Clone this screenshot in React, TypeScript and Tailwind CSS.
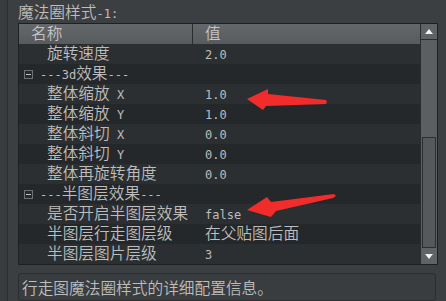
import React from "react";

type Row = { name?: string; value?: string; section?: string };

const rows: Row[] = [
  { name: "旋转速度", value: "2.0" },
  { section: "---3d效果---" },
  { name: "整体缩放 X", value: "1.0" },
  { name: "整体缩放 Y", value: "1.0" },
  { name: "整体斜切 X", value: "0.0" },
  { name: "整体斜切 Y", value: "0.0" },
  { name: "整体再旋转角度", value: "0.0" },
  { section: "---半图层效果---" },
  { name: "是否开启半图层效果", value: "false" },
  { name: "半图层行走图层级", value: "在父贴图后面" },
  { name: "半图层图片层级", value: "3" },
];

// CJK runs are drawn larger than the latin (mono) runs, like the Qt widget does
const Mixed = ({ text }: { text: string }) => {
  const parts = text.split(/([\u3000-\u9fff\uff00-\uffef]+)/).filter(Boolean);
  return (
    <>
      {parts.map((p, i) =>
        /[\u3000-\u9fff\uff00-\uffef]/.test(p) ? (
          <span key={i} className="text-[15.7px] font-[350]">
            {p}
          </span>
        ) : (
          <span key={i} className="text-[12px] whitespace-pre">
            {p}
          </span>
        )
      )}
    </>
  );
};

export default function App() {
  return (
    <div className="relative w-[446px] h-[301px] overflow-hidden flex bg-[#3c3f41] text-[#bdbdbd] font-['DejaVu_Sans_Mono','Noto_Sans_CJK_SC',monospace]">
      <div className="w-[8px] bg-[#393b3e] border-r border-[#2c2e30]" />

      <div className="flex-1 flex flex-col pl-[10px] pr-[8px]">
        {/* Title */}
        <div className="h-[23px] pt-[4px] leading-[18px]">
          <Mixed text="魔法圈样式-1:" />
        </div>

        {/* Property table */}
        <div className="h-[242px] flex border border-[#1e2022]">
          <div className="flex-1 flex flex-col">
            <div className="h-[20px] flex leading-[20px] bg-gradient-to-b from-[#64686b] to-[#575b5e] text-[#c4c4c4]">
              <div className="w-[174px] pl-[12px] border-r border-[#2a2c2e]">
                <Mixed text="名称" />
              </div>
              <div className="flex-1 pl-[12px]">
                <Mixed text="值" />
              </div>
            </div>
            {rows.map((r, i) => (
              <div
                key={i}
                className={`h-[20px] flex items-center leading-[20px] ${
                  i % 2 === 0 ? "bg-[#2c2f31]" : "bg-[#25282a]"
                }`}
              >
                {r.section ? (
                  <div className="flex items-center pl-[5px] gap-[7px]">
                    <div className="w-[9px] h-[9px] flex items-center justify-center border border-[#6f7275] bg-[#27292b]">
                      <div className="w-[5px] h-[1px] bg-[#c0c0c0]" />
                    </div>
                    <div>
                      <Mixed text={r.section} />
                    </div>
                  </div>
                ) : (
                  <>
                    <div className="w-[174px] pl-[28px] whitespace-nowrap">
                      <Mixed text={r.name!} />
                    </div>
                    <div className="flex-1 pl-[12px] whitespace-nowrap">
                      <Mixed text={r.value!} />
                    </div>
                  </>
                )}
              </div>
            ))}
          </div>

          {/* Scrollbar */}
          <div className="w-[17px] flex flex-col bg-[#5b5f62] border-l border-[#2a2c2e]">
            <div className="h-[16px] flex items-center justify-center border-b border-[#2a2c2e] bg-[#5f6366]">
              <svg width="8" height="5" viewBox="0 0 8 5">
                <polygon points="4,0 8,5 0,5" fill="#f2f2f2" />
              </svg>
            </div>
            <div className="flex-1 flex flex-col pt-[97px] px-[1px]">
              <div className="flex-1 border border-[#2c2e30] bg-[#55595c]" />
            </div>
            <div className="h-[16px] flex items-center justify-center bg-[#5f6366]">
              <svg width="8" height="5" viewBox="0 0 8 5">
                <polygon points="0,0 8,0 4,5" fill="#f2f2f2" />
              </svg>
            </div>
          </div>
        </div>

        {/* Description */}
        <div className="mt-[8px] mr-[2px] h-[40px] rounded-[3px] border border-[#2b2d2f] bg-[#3a3d3f] pl-[3px] pt-[5px] leading-[20px] whitespace-nowrap">
          <Mixed text="行走图魔法圈样式的详细配置信息。" />
        </div>
      </div>

      {/* Red annotation arrows */}
      <svg
        className="absolute inset-0 pointer-events-none"
        width="446"
        height="301"
        viewBox="0 0 446 301"
      >
        <polygon
          points="247,99 268,89 268,94 326,100 327,102 326,104 266,106 263,110"
          fill="#f22b2b"
        />
        <polygon
          points="247,210 267,197 271,202 334,194 336,196 333,198 276,211 271,217"
          fill="#f22b2b"
        />
      </svg>
    </div>
  );
}
